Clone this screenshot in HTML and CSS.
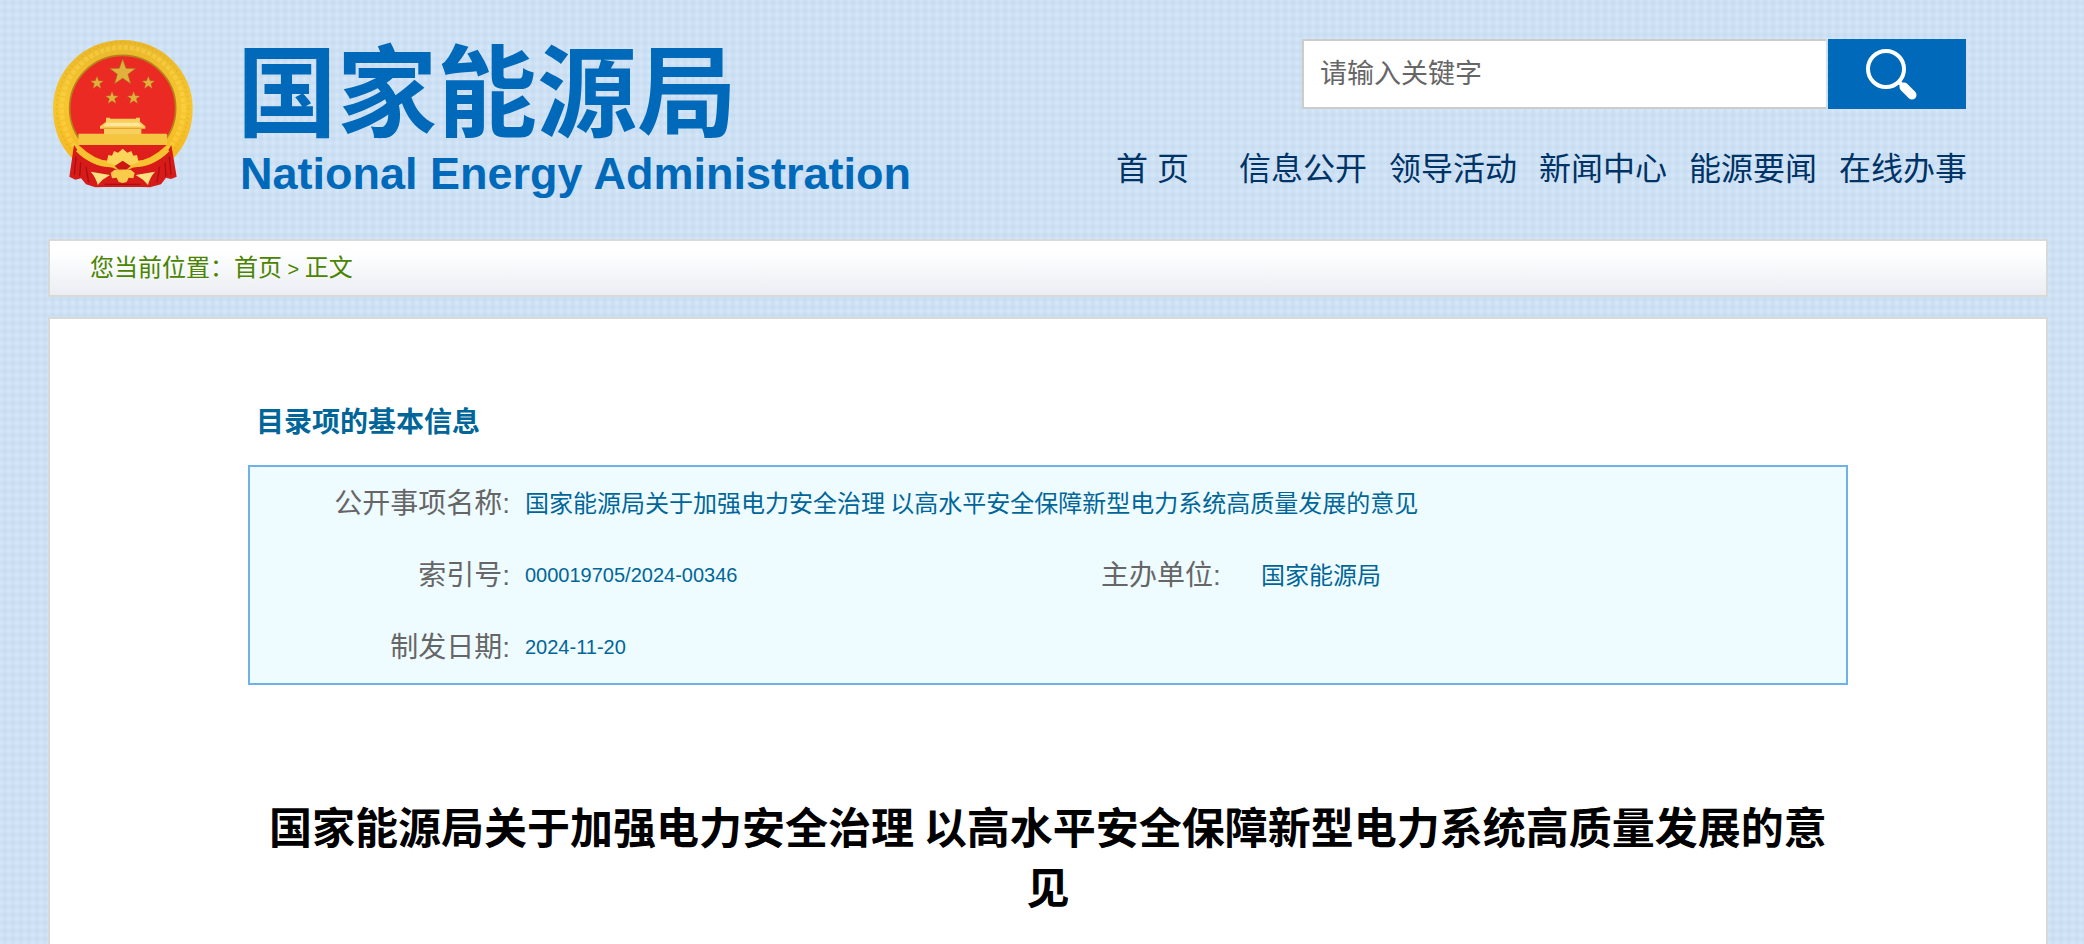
FILE: index.html
```html
<!DOCTYPE html>
<html lang="zh-CN">
<head>
<meta charset="utf-8">
<title>国家能源局</title>
<link rel="stylesheet" href="styles.css">
</head>
<body>
<div class="page">
  <header class="header">
    <a class="brand" href="#">
      <svg class="emblem" viewBox="41 45 420 444" aria-hidden="true">
        <defs>
          <linearGradient id="gold" x1="0" y1="0" x2="0" y2="1">
            <stop offset="0" stop-color="#e9b82c"/>
            <stop offset=".5" stop-color="#f6c62f"/>
            <stop offset="1" stop-color="#f4b51f"/>
          </linearGradient>
          <path id="star" d="M0-10 2.5-3.2 9.5-3.1 3.9 1.2 5.9 8.1 0 4-5.9 8.1-3.9 1.2-9.5-3.1-2.5-3.2Z"/>
        </defs>
        <path fill="url(#gold)" d="M250 45C366 45 460 136 460 250C460 316 436 366 400 402L340 440H160L100 402C64 366 41 316 41 250C41 136 134 45 250 45Z"/>
        <circle cx="250" cy="250" r="183" fill="none" stroke="#ffdc55" stroke-width="14" stroke-dasharray="13 5" opacity=".4"/>
        <circle cx="250" cy="250" r="198" fill="none" stroke="#d99a20" stroke-width="5" stroke-dasharray="5 9" opacity=".35"/>
        <circle cx="250" cy="250" r="159" fill="#ec2a24" stroke="#b8801c" stroke-width="5"/>
        <g fill="#e0b23c" stroke="#a96a1c" stroke-width=".5">
          <use href="#star" transform="translate(250 143) scale(4.1)"/>
          <use href="#star" transform="translate(173 174) scale(2)"/>
          <use href="#star" transform="translate(327 174) scale(2)"/>
          <use href="#star" transform="translate(218 219) scale(2)"/>
          <use href="#star" transform="translate(283 219) scale(2)"/>
        </g>
        <path fill="#f8cf5c" d="M200 278H212V281H290V278H302V290L318 304V311H306V326H382V360H118V326H194V311H182V304L200 290Z"/>
        <path fill="#ffe79b" d="M203 293H299L307 304H193Z"/>
        <path fill="#e2a72b" d="M191 308H309V312H191Z"/>
        <path fill="#f5c540" d="M118 328H382V360H118Z"/>
        <path fill="#de1f1c" d="M118 360H382Q335 405 290 409L250 420L210 409Q165 405 118 360Z"/>
        <path fill="#d71b18" d="M104 360L118 380Q154 425 218 427L250 412L282 427Q346 425 384 380L396 360L412 455L395 462L380 458L365 478L332 487L305 486H195L168 487L140 478L125 460L108 464L90 455Z"/>
        <path fill="none" stroke="#f7c231" stroke-width="17" d="M116 373Q155 414 220 419L250 432L280 419Q345 414 384 373"/>
        <path fill="#fbd55a" d="M202 412L207 390L218 392L224 378L236 383L250 371L264 383L276 378L282 392L293 390L298 412L268 422H232Z"/>
        <path fill="#ce1715" d="M226 423L250 407L274 423L262 434H238Z"/>
        <path fill="#f8cc4a" d="M214 444L226 434H274L286 444L282 460L268 458L262 471L250 474L238 471L232 458L218 460Z"/>
        <path fill="#ffe181" d="M154 440L212 450L190 464L175 480Q170 458 154 440ZM347 440L289 450L311 464L326 480Q331 458 347 440Z"/>
        <path fill="none" stroke="#a80f12" stroke-width="4" d="M110 395L105 450M124 412L121 454M140 425L148 472M390 395L395 450M377 412L380 454M361 425L353 472M196 478H304"/>
      </svg>
      <span class="names">
        <span class="name-zh">国家能源局</span>
        <span class="name-en">National Energy Administration</span>
      </span>
    </a>
    <div class="tools">
      <form class="search">
        <input class="search-box" type="text" placeholder="请输入关键字" aria-label="请输入关键字">
        <button class="search-button" type="button" aria-label="搜索">
          <svg class="search-icon" viewBox="0 0 54 54" aria-hidden="true">
            <circle cx="21" cy="21" r="18" fill="none" stroke="#fff" stroke-width="4"/>
            <path d="M33 33L37 37" stroke="#fff" stroke-width="4"/>
            <path d="M39 39L47 47" stroke="#fff" stroke-width="9" stroke-linecap="round"/>
          </svg>
        </button>
      </form>
      <nav class="nav">
        <a class="home" href="#">首 页</a>
        <a href="#">信息公开</a>
        <a href="#">领导活动</a>
        <a href="#">新闻中心</a>
        <a href="#">能源要闻</a>
        <a href="#">在线办事</a>
      </nav>
    </div>
  </header>
  <div class="crumbs">您当前位置：<a href="#">首页</a><span class="sep"> &gt; </span>正文</div>
  <main class="content">
    <h2 class="section-title">目录项的基本信息</h2>
    <table class="info">
      <colgroup><col class="col-label"><col class="col-value"><col class="col-unit"><col></colgroup>
      <tr><th scope="row">公开事项名称:</th><td colspan="3">国家能源局关于加强电力安全治理 以高水平安全保障新型电力系统高质量发展的意见</td></tr>
      <tr><th scope="row">索引号:</th><td class="code">000019705/2024-00346</td><th class="unit" scope="row">主办单位:</th><td>国家能源局</td></tr>
      <tr><th scope="row">制发日期:</th><td class="code" colspan="3">2024-11-20</td></tr>
    </table>
    <h1 class="title">国家能源局关于加强电力安全治理 以高水平安全保障新型电力系统高质量发展的意见</h1>
  </main>
</div>
</body>
</html>
```

FILE: styles.css
```css
* { box-sizing: border-box; }

body {
  margin: 0;
  min-height: 100vh;
  display: flex;
  font-family: "Liberation Sans", "Noto Sans CJK SC", sans-serif;
  color: #666;
  background-color: #d4e6f7;
  background-image:
    repeating-linear-gradient(90deg, rgba(176, 202, 228, 0) 0 2px, rgba(176, 202, 228, .2) 4px 6px, rgba(176, 202, 228, 0) 8px),
    repeating-linear-gradient(0deg, rgba(176, 202, 228, 0) 0 2px, rgba(176, 202, 228, .2) 4px 6px, rgba(176, 202, 228, 0) 8px);
}

a { color: inherit; text-decoration: none; }

.page {
  flex: 1;
  display: flex;
  flex-direction: column;
  margin: 0 36px 0 48px;
}

.header {
  display: flex;
  justify-content: space-between;
  align-items: flex-start;
  height: 239px;
  padding: 39px 80px 0 5px;
}

.brand {
  display: flex;
  gap: 44px;
  padding-top: 1px;
  color: #0069ba;
  font-weight: 700;
}

.emblem { width: 140px; height: 148px; }

.names { display: flex; flex-direction: column; }

.name-zh {
  font-size: 100px;
  line-height: 108px;
}

.name-en {
  padding-left: 3px;
  font-size: 45px;
  line-height: 52px;
}

.tools {
  display: flex;
  flex-direction: column;
  align-items: flex-end;
  gap: 36px;
}

.search { display: flex; gap: 2px; height: 71px; }

.search-box {
  width: 524px;
  height: 70px;
  padding: 0 16px;
  border: 2px solid #ccc;
  border-right: 0;
  background: #fff;
  font: 27px "Liberation Sans", "Noto Sans CJK SC", sans-serif;
  color: #666;
}

.search-box::placeholder { color: #666; }

.search-button {
  display: flex;
  width: 140px;
  padding: 9px 0 0 37px;
  border: 0 solid #d5e0f2;
  border-width: 0 2px 1px 0;
  background: #0069ba;
}

.search-icon { width: 54px; height: 54px; }

.nav {
  display: flex;
  gap: 22px;
  font-size: 32px;
  line-height: 46px;
  color: #036;
  padding-right: 1px;
}

.home { margin-right: 28px; }

.crumbs {
  height: 58px;
  padding-left: 40px;
  border: 2px solid #d9d9d9;
  background: linear-gradient(#fff 20%, #eaeef3);
  font-size: 24px;
  line-height: 53px;
  color: #4a8400;
}

.sep { font-size: 20px; }

.content {
  flex: 1;
  margin-top: 20px;
  padding: 84px 198px 0;
  border: 2px solid #d9d9d9;
  border-bottom: 0;
  background: #fff;
}

.section-title {
  margin: 0;
  padding-left: 8px;
  font-size: 28px;
  line-height: 40px;
  color: #069;
}

.info {
  width: 100%;
  margin-top: 22px;
  border: 2px solid #72b0e8;
  border-spacing: 0;
  table-layout: fixed;
  background: #eefbff;
}

.info th, .info td {
  height: 72px;
  padding: 0 0 4px;
  text-align: left;
}

.info th {
  padding-right: 15px;
  font-size: 28px;
  font-weight: 400;
  text-align: right;
}

.info th.unit { padding-right: 0; text-align: left; }

.info td {
  font-family: "Noto Sans CJK SC", sans-serif;
  font-size: 24px;
  color: #069;
}

.info td.code {
  padding-bottom: 0;
  font-family: "Liberation Sans", sans-serif;
  font-size: 20px;
}

.col-label { width: 275px; }
.col-value { width: 576px; }
.col-unit { width: 160px; }

.title {
  margin: 110px 0 0;
  font-family: "Noto Sans CJK SC", sans-serif;
  font-size: 43px;
  line-height: 60px;
  text-align: center;
  color: #000;
}
```
